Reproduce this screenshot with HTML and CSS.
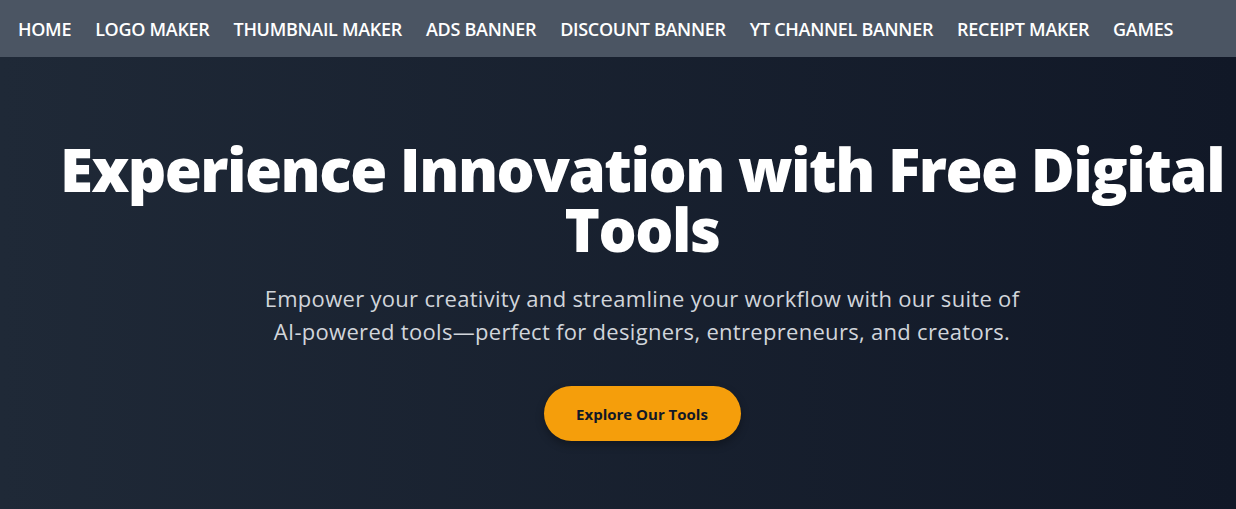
FILE: index.html
```html
<!DOCTYPE html>
<html lang="en">
<head>
<meta charset="utf-8">
<title>Free Digital Tools</title>
<link rel="stylesheet" href="styles.css">
</head>
<body>
<nav class="nav">
  <a class="nav-link" href="#">HOME</a>
  <a class="nav-link" href="#">LOGO MAKER</a>
  <a class="nav-link" href="#">THUMBNAIL MAKER</a>
  <a class="nav-link" href="#">ADS BANNER</a>
  <a class="nav-link" href="#">DISCOUNT BANNER</a>
  <a class="nav-link" href="#">YT CHANNEL BANNER</a>
  <a class="nav-link" href="#">RECEIPT MAKER</a>
  <a class="nav-link" href="#">GAMES</a>
</nav>
<main class="hero">
  <div class="hero-inner">
    <h1 class="hero-title">Experience Innovation with Free Digital Tools</h1>
    <p class="hero-sub">Empower your creativity and streamline your workflow with our suite of <span class="nowrap">AI-powered</span> tools—perfect for designers, entrepreneurs, and creators.</p>
    <a class="hero-btn" href="#">Explore Our Tools</a>
  </div>
</main>
</body>
</html>
```
FILE: styles.css
```css
* { box-sizing: border-box; }
html, body { margin: 0; padding: 0; }
body {
  width: 1236px;
  height: 509px;
  overflow: hidden;
  font-family: "Open Sans", "Noto Sans", sans-serif;
  background: linear-gradient(to right, #1f2937, #111827);
  color: #fff;
}
.nav {
  height: 57px;
  background: #4b5563;
  display: flex;
  align-items: center;
  gap: 24px;
  padding-left: 18px;
}
.nav-link {
  color: #fff;
  text-decoration: none;
  font-size: 18px;
  font-weight: 600;
  letter-spacing: -0.3px;
  white-space: nowrap;
}
.hero {
  padding-left: 48px;
}
.hero-inner {
  display: flex;
  flex-direction: column;
  align-items: center;
  text-align: center;
  padding-top: 82px;
}
.hero-title {
  margin: 0;
  width: 1170px;
  font-size: 60px;
  line-height: 60px;
  font-weight: 800;
  letter-spacing: -1.5px;
}
.hero-sub {
  margin: 23px 0 0;
  width: 768px;
  font-size: 22px;
  line-height: 33px;
  color: #d1d5db;
  letter-spacing: 0.3px;
}
.nowrap {
  white-space: nowrap;
}
.hero-btn {
  margin-top: 38px;
  width: 197px;
  height: 55px;
  border-radius: 28px;
  background: #f59e0b;
  color: #111827;
  font-size: 15px;
  font-weight: 700;
  text-decoration: none;
  display: flex;
  align-items: center;
  justify-content: center;
  box-shadow: 0 4px 8px rgba(0,0,0,0.3);
}
```
